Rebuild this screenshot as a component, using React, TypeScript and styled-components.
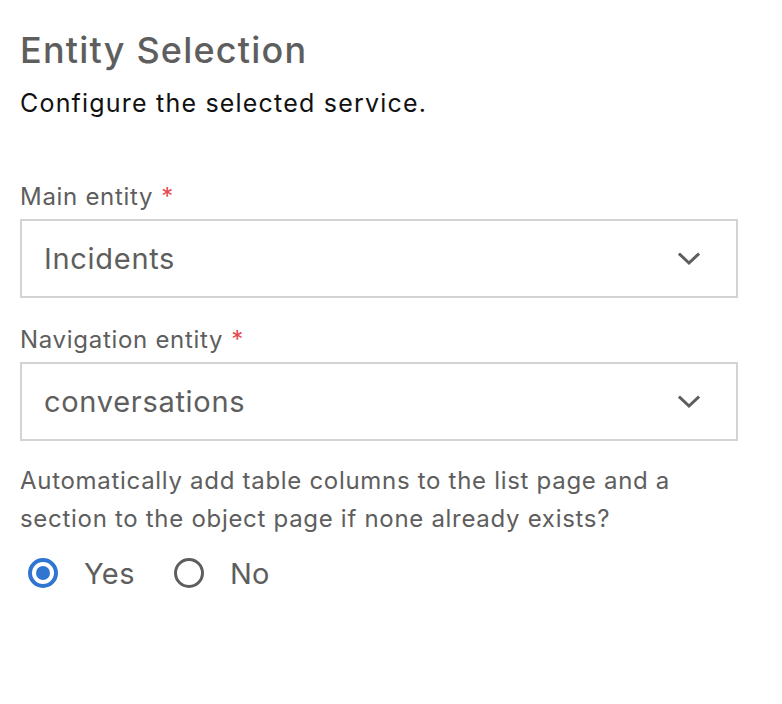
import styled, { createGlobalStyle } from 'styled-components'

const GlobalStyle = createGlobalStyle`
  body {
    margin: 0;
    background: #ffffff;
    font-family: Inter, "Noto Sans", sans-serif;
  }
`

const Page = styled.div`
  padding: 30px 44px 0 20px;
  width: 782px;
  box-sizing: border-box;
`

const Title = styled.h1`
  margin: 0;
  font-size: 36px;
  line-height: 40px;
  font-weight: 500;
  letter-spacing: 1.2px;
  color: #5e5e5e;
`

const Subtitle = styled.p`
  margin: 18px 0 0;
  font-size: 25px;
  line-height: 30px;
  letter-spacing: 1.2px;
  color: #111111;
`

const Field = styled.div<{ $top: number }>`
  margin-top: ${({ $top }) => $top}px;
  display: flex;
  flex-direction: column;
  gap: 7px;
`

const Label = styled.label`
  font-size: 24px;
  line-height: 30px;
  letter-spacing: 0.7px;
  color: #5e5e5e;
`

const Required = styled.span`
  color: #e5484d;
  margin-left: 8px;
`

const SelectBox = styled.div`
  height: 79px;
  box-sizing: border-box;
  border: 2px solid #d3d3d3;
  display: flex;
  align-items: center;
  justify-content: space-between;
  padding: 0 36px 0 22px;
  font-size: 29px;
  letter-spacing: 0.7px;
  color: #5e5e5e;
`

const Question = styled.p`
  margin: 21px 0 0;
  font-size: 24px;
  line-height: 38px;
  letter-spacing: 0.7px;
  color: #5e5e5e;
`

const RadioRow = styled.div`
  margin-top: 15px;
  height: 40px;
  display: flex;
  align-items: center;
  padding-left: 8px;
  gap: 39px;
`

const RadioOption = styled.label`
  display: flex;
  align-items: center;
  gap: 26px;
  font-size: 29px;
  letter-spacing: 0.4px;
  color: #5e5e5e;
`

const Circle = styled.span<{ $checked: boolean }>`
  width: 30px;
  height: 30px;
  box-sizing: border-box;
  border-radius: 50%;
  border: ${({ $checked }) => ($checked ? '4px solid #2f75d1' : '3px solid #5e5e5e')};
  display: flex;
  align-items: center;
  justify-content: center;
  &::after {
    content: '';
    display: ${({ $checked }) => ($checked ? 'block' : 'none')};
    width: 14px;
    height: 14px;
    border-radius: 50%;
    background: #2f75d1;
  }
`

function Chevron() {
  return (
    <svg width="22" height="14" viewBox="0 0 22 14" fill="none">
      <path d="M2 2.5 L11 11 L20 2.5" stroke="#5e5e5e" strokeWidth="3" strokeLinecap="square" />
    </svg>
  )
}

function Select({ value }: { value: string }) {
  return (
    <SelectBox>
      <span>{value}</span>
      <Chevron />
    </SelectBox>
  )
}

export default function App() {
  return (
    <>
      <GlobalStyle />
      <Page>
        <Title>Entity Selection</Title>
        <Subtitle>Configure the selected service.</Subtitle>
        <Field $top={64}>
          <Label>
            Main entity<Required>*</Required>
          </Label>
          <Select value="Incidents" />
        </Field>
        <Field $top={27}>
          <Label>
            Navigation entity<Required>*</Required>
          </Label>
          <Select value="conversations" />
        </Field>
        <Question>
          Automatically add table columns to the list page and a<br />
          section to the object page if none already exists?
        </Question>
        <RadioRow>
          <RadioOption>
            <Circle $checked />
            Yes
          </RadioOption>
          <RadioOption>
            <Circle $checked={false} />
            No
          </RadioOption>
        </RadioRow>
      </Page>
    </>
  )
}
